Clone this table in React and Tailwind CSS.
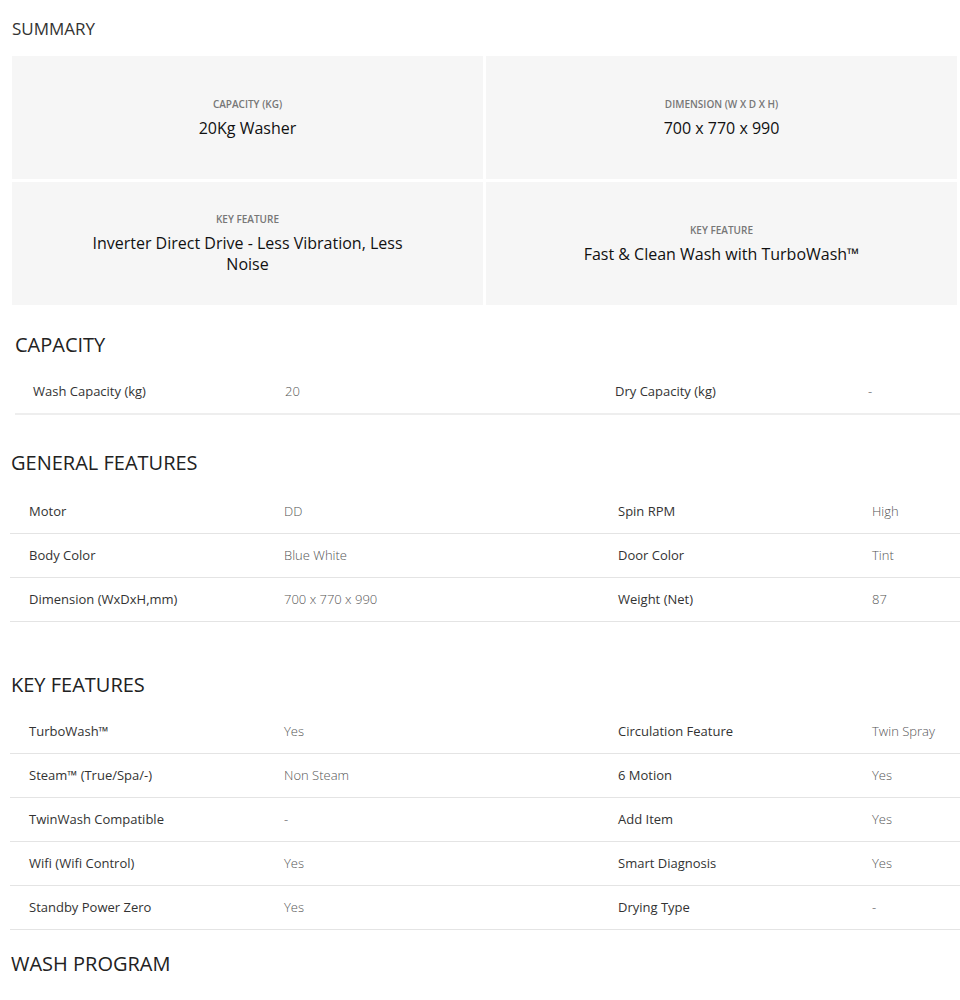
import React from 'react';

const summary = [
  { label: 'CAPACITY (KG)', value: '20Kg Washer' },
  { label: 'DIMENSION (W X D X H)', value: '700 x 770 x 990' },
  { label: 'KEY FEATURE', value: 'Inverter Direct Drive - Less Vibration, Less Noise' },
  { label: 'KEY FEATURE', value: 'Fast & Clean Wash with TurboWash™' },
];

const generalFeatures = [
  ['Motor', 'DD', 'Spin RPM', 'High'],
  ['Body Color', 'Blue White', 'Door Color', 'Tint'],
  ['Dimension (WxDxH,mm)', '700 x 770 x 990', 'Weight (Net)', '87'],
];

const keyFeatures = [
  ['TurboWash™', 'Yes', 'Circulation Feature', 'Twin Spray'],
  ['Steam™ (True/Spa/-)', 'Non Steam', '6 Motion', 'Yes'],
  ['TwinWash Compatible', '-', 'Add Item', 'Yes'],
  ['Wifi (Wifi Control)', 'Yes', 'Smart Diagnosis', 'Yes'],
  ['Standby Power Zero', 'Yes', 'Drying Type', '-'],
];

const SpecRow = ({ row }) => (
  <div className="grid h-[44px] grid-cols-[274px_334px_254px_1fr] items-center border-b border-[#e4e4e4] text-[13px]">
    <span className="pl-[19px] text-[#333]">{row[0]}</span>
    <span className="font-light text-[#555]">{row[1]}</span>
    <span className="text-[#333]">{row[2]}</span>
    <span className="font-light text-[#555]">{row[3]}</span>
  </div>
);

const SectionTitle = ({ children, className = '' }) => (
  <h2 className={`text-[20px] leading-[28px] text-[#222] ${className}`}>{children}</h2>
);

export default function App() {
  return (
    <div className="min-h-screen bg-white font-['Open_Sans',sans-serif]">
      {/* Summary */}
      <h2 className="pl-[12px] pt-[18px] text-[17px] leading-[22px] text-[#333]">SUMMARY</h2>
      <div className="ml-[12px] mt-[16px] grid w-[945px] grid-cols-2 gap-[3px]">
        {summary.map((item, i) => (
          <div key={i} className="flex h-[123px] flex-col items-center justify-center bg-[#f6f6f6] px-[70px] text-center">
            <p className="text-[10px] font-semibold leading-[14px] text-[#777]">{item.label}</p>
            <p className="mt-[7px] text-[16px] leading-[21px] text-[#111]">{item.value}</p>
          </div>
        ))}
      </div>

      {/* Capacity */}
      <SectionTitle className="ml-[15px] mt-[26px]">CAPACITY</SectionTitle>
      <div className="ml-[15px] mt-[11px] grid h-[45px] grid-cols-[270px_330px_253px_1fr] items-center border-b-2 border-[#eeeeee] text-[13px]">
        <span className="pl-[18px] text-[#333]">Wash Capacity (kg)</span>
        <span className="font-light text-[#555]">20</span>
        <span className="text-[#333]">Dry Capacity (kg)</span>
        <span className="font-light text-[#555]">-</span>
      </div>

      {/* General features */}
      <SectionTitle className="ml-[11px] mt-[34px]">GENERAL FEATURES</SectionTitle>
      <div className="ml-[10px] mt-[13px]">
        {generalFeatures.map((row, i) => (
          <SpecRow key={i} row={row} />
        ))}
      </div>

      {/* Key features */}
      <SectionTitle className="ml-[11px] mt-[49px]">KEY FEATURES</SectionTitle>
      <div className="ml-[10px] mt-[11px]">
        {keyFeatures.map((row, i) => (
          <SpecRow key={i} row={row} />
        ))}
      </div>

      <SectionTitle className="ml-[11px] mt-[20px]">WASH PROGRAM</SectionTitle>
    </div>
  );
}
